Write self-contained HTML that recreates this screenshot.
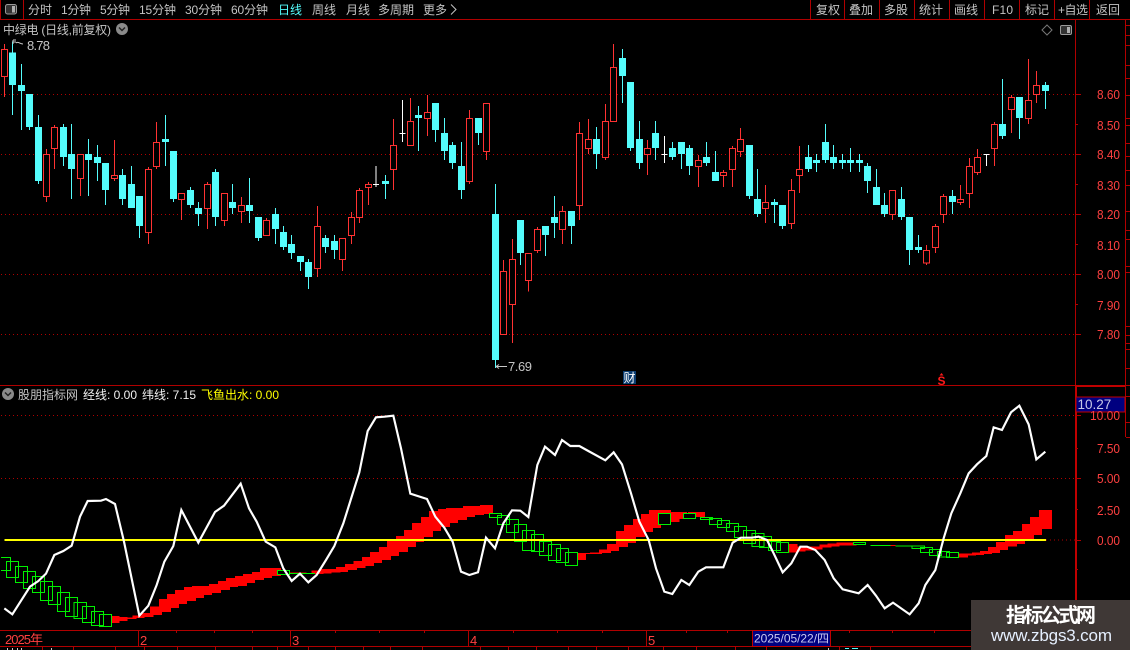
<!DOCTYPE html>
<html lang="zh">
<head>
<meta charset="utf-8">
<title>中绿电</title>
<style>
html,body{margin:0;padding:0;background:#000;width:1130px;height:650px;overflow:hidden}
svg{display:block}
text{font-family:"WenQuanYi Zen Hei","Liberation Sans","Noto Sans CJK SC",sans-serif;font-size:12px;fill:#c4c4c4}
.n{font-family:"Liberation Sans","DejaVu Sans",sans-serif}
.r{fill:#ff4040;text-anchor:end;font-size:13px}
.t{fill:#ff4040}
.w{fill:#f0f0f0}
.y{fill:#ffff00}
.c{fill:#54fcfc}
</style>
</head>
<body>
<svg width="1130" height="650" viewBox="0 0 1130 650" xmlns="http://www.w3.org/2000/svg">
<rect width="1130" height="650" fill="#000"/>

<g transform="scale(.33333)" shape-rendering="crispEdges">
<!-- dotted grid -->
<path d="M3 283.5H3240M3 463.5H3240M3 643.5H3240M3 823.5H3240M3 1003.5H3240M3 1246.5H3225M3 1435.5H3225" stroke="#b00000" stroke-width="3" stroke-dasharray="3 9" fill="none"/>
<path d="M3138 1620.5H3225" stroke="#b00000" stroke-width="3" stroke-dasharray="3 9" fill="none"/>

<g transform="translate(.5 0)">
<!-- cyan wicks -->
<path stroke="#54fcfc" stroke-width="3" fill="none" d="M37 125V345M64 192V390M88 282V390M115 345V552M190 372V498M214 372V597M265 417V588M292 435V543M316 489V615M367 507V615M394 498V624M418 588V714M496 345V498M520 453V606M571 561V624M595 606V678M646 507V678M697 552V642M748 534V669M775 651V723M826 624V732M850 678V750M874 705V777M901 768V813M925 777V867M976 705V759M1003 705V777M1156 525V597M1255 318V453M1306 309V426M1333 354V480M1357 426V507M1384 426V597M1435 354V435M1486 552V1104M1561 660V795M1636 678V768M1663 588V714M1714 633V732M1789 381V507M1867 147V309M1891 246V453M1918 363V507M1966 363V480M2017 426V480M2044 426V507M2068 435V525M2119 426V498M2146 453V543M2248 435V597M2272 507V651M2323 597V669M2347 615V687M2425 435V516M2449 462V516M2476 372V489M2500 435V507M2527 462V507M2551 444V516M2578 462V516M2602 489V579M2629 507V615M2653 579V651M2704 561V660M2728 651V795M2755 705V759M2857 570V642M3007 237V417M3058 291V417M3136 246V327"/>
<!-- cyan bodies -->
<path stroke="#54fcfc" stroke-width="21" fill="none" d="M37 157V255M64 255V273M88 282V381M115 381V543M190 381V471M214 462V507M265 462V480M292 471V489M316 489V570M367 525V597M394 552V624M418 588V678M496 417V426M520 453V597M571 570V615M595 624V642M646 516V651M697 606V624M748 615V633M775 651V714M826 642V687M850 696V741M874 732V759M901 768V786M925 786V831M976 714V741M1003 723V750M1156 543V552M1255 345V354M1306 309V390M1333 399V453M1357 435V489M1384 498V570M1435 354V399M1486 642V1080M1561 660V759M1636 678V705M1663 651V669M1714 633V678M1789 417V462M1867 174V228M1891 246V444M1918 417V489M1966 399V444M2017 444V471M2044 426V462M2068 444V498M2119 471V489M2146 516V543M2248 435V588M2272 597V642M2323 606V615M2347 615V678M2425 471V507M2449 480V489M2476 426V480M2500 471V489M2527 480V489M2551 480V489M2578 480V489M2602 498V543M2629 561V615M2653 615V642M2704 597V651M2728 651V750M2755 741V750M2857 588V606M3007 372V408M3058 291V354M3136 255V273"/>
<!-- red wicks -->
<path stroke="#ff3232" stroke-width="3" fill="none" d="M13 132V291M139 447V606M163 375V507M241 462V588M343 420V543M445 501V732M469 366V507M544 579V660M622 546V687M673 579V678M724 591V669M799 654V708M952 618V831M1027 714V813M1054 636V732M1078 564V669M1105 546V615M1180 357V570M1231 294V438M1282 285V408M1408 330V552M1459 309V480M1510 780V1004M1537 717V1029M1585 760V875M1612 681V759M1687 618V732M1738 366V660M1765 357V462M1816 312V480M1840 132V365M1942 420V525M2095 465V561M2170 510V561M2197 438V561M2221 384V471M2296 555V669M2374 537V687M2398 438V579M2677 571V660M2779 735V795M2806 672V759M2830 582V669M2881 555V615M2908 474V624M2932 447V525M2983 366V498M3034 285V399M3085 177V372M3109 213V309"/>
<!-- red hollow bodies -->
<path stroke="#ff3232" stroke-width="3" fill="#000" d="M4 148h18V230h-18zM130 463h18V589h-18zM154 382h18V445h-18zM232 463h18V535h-18zM334 526h18V535h-18zM436 508h18V698h-18zM460 427h18V499h-18zM535 580h18V598h-18zM613 553h18V626h-18zM664 580h18V662h-18zM715 616h18V635h-18zM790 661h18V707h-18zM943 679h18V806h-18zM1018 715h18V779h-18zM1045 652h18V707h-18zM1069 571h18V652h-18zM1096 553h18V563h-18zM1171 436h18V509h-18zM1222 364h18V437h-18zM1273 337h18V356h-18zM1399 355h18V545h-18zM1450 310h18V455h-18zM1501 814h18V1004h-18zM1528 778h18V914h-18zM1576 760h18V842h-18zM1603 688h18V752h-18zM1678 634h18V689h-18zM1729 400h18V617h-18zM1756 418h18V446h-18zM1807 364h18V473h-18zM1831 202h18V365h-18zM1933 445h18V464h-18zM2086 481h18V500h-18zM2161 517h18V526h-18zM2188 445h18V509h-18zM2212 418h18V455h-18zM2287 607h18V626h-18zM2365 571h18V671h-18zM2389 508h18V527h-18zM2668 571h18V644h-18zM2770 751h18V789h-18zM2797 679h18V743h-18zM2821 589h18V644h-18zM2872 598h18V608h-18zM2899 499h18V581h-18zM2923 472h18V518h-18zM2974 373h18V445h-18zM3025 292h18V329h-18zM3076 301h18V356h-18zM3100 256h18V284h-18z"/>
<!-- white doji -->
<path stroke="#fff" stroke-width="3" fill="none" d="M1128 498V561M1119 553H1137M1207 300V426M1198 400H1216M1993 408V489M1984 463H2002M2959 463V498M2950 463H2968"/>
</g>

<!-- lower indicator -->
<g transform="translate(0 1155)">
<!-- red band -->
<path fill="#ff0000" d="M322 693h36V714h-36zM346 696h36V708h-36zM373 697h36V702h-36zM397 691h36V699h-36zM424 684h36V696h-36zM450 665h36V690h-36zM477 642h36V681h-36zM501 627h36V669h-36zM525 615h36V657h-36zM552 606h36V648h-36zM576 603h36V639h-36zM600 603h36V630h-36zM627 597h36V624h-36zM654 588h36V615h-36zM678 579h36V606h-36zM705 573h36V603h-36zM729 567h36V594h-36zM756 561h36V585h-36zM780 549h36V579h-36zM807 549h36V573h-36zM868 562h52V567h-52zM934 556h36V567h-36zM958 552h36V565h-36zM985 552h36V562h-36zM1008 546h36V561h-36zM1035 537h36V555h-36zM1060 528h36V549h-36zM1086 516h36V543h-36zM1110 501h36V534h-36zM1137 486h36V525h-36zM1161 468h36V513h-36zM1188 453h36V501h-36zM1212 435h36V486h-36zM1236 414h36V471h-36zM1263 396h36V456h-36zM1287 378h36V438h-36zM1314 372h36V426h-36zM1338 369h36V414h-36zM1365 369h36V405h-36zM1389 363h36V396h-36zM1416 363h36V390h-36zM1440 360h39V387h-39zM1722 504h36V525h-36zM1746 504h36V507h-36zM1770 502h36V507h-36zM1797 493h36V504h-36zM1821 477h36V498h-36zM1848 438h36V486h-36zM1872 420h36V474h-36zM1899 402h36V456h-36zM1923 387h36V441h-36zM1947 375h36V429h-36zM1977 375h36V419h-36zM2013 381h25V411h-25zM2025 381h36V402h-36zM2064 381h51V396h-51zM2356 477h36V502h-36zM2380 484h36V500h-36zM2407 484h36V497h-36zM2431 484h36V494h-36zM2458 478h36V488h-36zM2482 475h36V485h-36zM2509 472h36V482h-36zM2533 472h36V482h-36zM2671 480h15V483h-15zM2868 505h36V518h-36zM2892 505h36V512h-36zM2916 502h36V510h-36zM2940 498h36V507h-36zM2964 486h36V504h-36zM2988 471h36V495h-36zM3015 450h36V485h-36zM3039 438h36V477h-36zM3066 417h36V465h-36zM3090 396h36V450h-36zM3117 375h39V432h-39z"/>
<!-- green hollow -->
<path stroke="#00f000" stroke-width="3" fill="#000" d="M3 517H32V556H3M19 529h37V577h-37zM46 544h37V592h-37zM70 559h37V610h-37zM97 574h37V622h-37zM121 589h37V646h-37zM145 604h37V658h-37zM172 622h37V679h-37zM196 637h37V694h-37zM222 652h37V700h-37zM247 664h37V712h-37zM274 679h37V721h-37zM298 688h37V725h-37zM832 556h37V568h-37zM1468 385h37V397h-37zM1492 392h37V418h-37zM1519 403h37V442h-37zM1543 418h37V469h-37zM1567 436h37V497h-37zM1594 448h37V500h-37zM1618 469h37V512h-37zM1645 478h37V527h-37zM1669 490h37V532h-37zM1696 502h37V542h-37zM1975 385h37V419h-37zM2050 385h37V401h-37zM2101 397h37V404h-37zM2128 400h37V418h-37zM2152 407h37V428h-37zM2179 415h37V440h-37zM2203 424h37V458h-37zM2230 436h37V476h-37zM2256 446h36V485h-36zM2278 454h37V488h-37zM2305 470h37V497h-37zM2329 472h37V502h-37zM2560 472h37V479h-37zM2736 483h37V490h-37zM2761 488h37V502h-37zM2788 493h37V512h-37zM2812 499h37V516h-37zM2839 503h37V517h-37z"/>
<path stroke="#00f000" stroke-width="3" fill="none" d="M868 566H945M2611 481H2671M2686 483H2736"/>
<!-- yellow -->
<path stroke="#ffff00" stroke-width="6" fill="none" d="M13 465H3138"/>
</g>
</g>

<!-- white line in lower panel -->
<g transform="translate(0 385) scale(.33333)">
<polyline fill="none" stroke="#fff" stroke-width="6.5" stroke-linejoin="miter" points="13,670 37,688 90,605 115,588 138,566 163,510 190,498 215,482 240,395 263,348 303,347 318,342 345,357 372,470 418,692 445,662 470,600 493,530 520,483 544,375 595,473 645,381 672,362 722,296 747,370 770,410 797,470 826,487 850,550 875,588 900,566 925,592 950,570 978,525 1003,483 1030,415 1052,345 1078,262 1103,138 1128,97 1153,95 1180,92 1203,190 1231,326 1281,342 1306,395 1333,428 1358,470 1383,560 1408,570 1434,562 1458,458 1485,490 1510,415 1536,376 1561,377 1585,396 1612,240 1635,185 1665,210 1686,165 1711,183 1738,183 1765,198 1816,226 1841,202 1866,238 1893,325 1918,410 1946,465 1968,550 1993,620 2017,627 2044,585 2068,600 2095,560 2118,547 2170,547 2198,473 2223,458 2256,458 2276,455 2301,465 2321,505 2348,562 2374,535 2401,485 2421,485 2446,495 2474,525 2501,580 2528,613 2576,625 2603,600 2628,632 2654,670 2679,653 2729,688 2756,655 2776,600 2806,555 2831,460 2854,385 2881,325 2906,265 2931,238 2959,213 2981,127 3006,135 3033,82 3058,62 3086,118 3109,223 3136,200"/>
</g>

<g shape-rendering="crispEdges">
<!-- frame lines -->
<path stroke="#b00000" stroke-width="1" fill="none" d="M0 19.5H1130M0 385.5H1130M0 630.5H1075M0 646.5H1130M1075.5 19V630M23.5 0V19M.5 0V19M810.5 0V19M844.5 0V19M879.5 0V19M914.5 0V19M949.5 0V19M984.5 0V19M1019.5 0V19M1054.5 0V19M1089.5 0V19M1125.5 19V437"/>
<path stroke="#c00000" stroke-width="2" fill="none" d="M1076 385V630M1076 386H1125"/>
<!-- axis ticks -->
<path stroke="#b00000" stroke-width="1" fill="none" d="M1075 94.5h6M1075 124.5h3M1075 154.5h6M1075 184.5h3M1075 214.5h6M1075 244.5h3M1075 274.5h6M1075 304.5h3M1075 334.5h6M1075 415.5h6M1075 448.5h3M1075 478.5h6M1075 509.5h3M1075 540.5h6M1075 569.5h3M1126 25.5h4M1126 35.5h4M1126 45.5h4M1126 65.5h4M1126 78.5h4M1126 95.5h4M1126 118.5h4M1126 125.5h4M1126 143.5h4M1126 156.5h4M1126 170.5h4M1126 185.5h4M1126 211.5h4M1126 230.5h4M1126 239.5h4M1126 266.5h4M1126 272.5h4M1126 326.5h4M1126 335.5h4M1126 343.5h4M1126 349.5h4M1126 368.5h4M1126 396.5h4M1126 422.5h4M1126 437.5h4"/>
<!-- time ticks -->
<path stroke="#b00000" stroke-width="1" fill="none" d="M138.5 630V646M290.5 630V646M468.5 630V646M646.5 630V646M176.5 630v3M214.5 630v3M252.5 630v3M335.5 630v3M379.5 630v3M424.5 630v3M513.5 630v3M557.5 630v3M602.5 630v3M686.5 630v3M727.5 630v3M849.5 630v3M892.5 630v3M934.5 630v3M42.5 646v4M73.5 646v4M115.5 646v4M144.5 646v4M177.5 646v4M215.5 646v4M252.5 646v4M277.5 646v4M308.5 646v4M335.5 646v4M363.5 646v4M390.5 646v4M422.5 646v4M480.5 646v4M508.5 646v4M536.5 646v4M568.5 646v4M596.5 646v4M628.5 646v4M663.5 646v4M696.5 646v4M735.5 646v4M766.5 646v4M839.5 646v4M870.5 646v4"/>
<path stroke="#c8c8c8" stroke-width="1" fill="none" d="M7.5 648v2M12.5 648v2M17.5 648v2M21.5 648v2M51.5 648v2M828.5 648v2"/>
<path stroke="#54fcfc" stroke-width="1" fill="none" d="M845 648.5h4M852 648.5h6"/>
<!-- blue boxes -->
<rect x="1076" y="397" width="49" height="15" fill="#000080" stroke="#c00000" stroke-width="1"/>
<rect x="752.5" y="630.5" width="78" height="16" fill="#000080" stroke="#c00000" stroke-width="1"/>
<rect x="623" y="371" width="13" height="13" fill="#0c3d70"/>
</g>

<!-- toolbar -->
<rect x="5.500" y="4.500" width="11" height="9.500" rx="2" fill="#333" stroke="#9a9a9a" stroke-width="1"/>
<rect x="12" y="6" width="3" height="6.500" fill="#b0b0b0"/>

<text x="28" y="14">分时</text>
<text x="61" y="14" textLength="30">1分钟</text>
<text x="100" y="14" textLength="30">5分钟</text>
<text x="139" y="14" textLength="37">15分钟</text>
<text x="185" y="14" textLength="37">30分钟</text>
<text x="231" y="14" textLength="37">60分钟</text>
<text x="278" y="14" class="c">日线</text>
<text x="312" y="14">周线</text>
<text x="346" y="14">月线</text>
<text x="378" y="14">多周期</text>
<text x="423" y="14">更多</text>
<path d="M451 4.500L456 9.500L451 14.500" fill="none" stroke="#c4c4c4" stroke-width="1"/>

<text x="816" y="14">复权</text>
<text x="849" y="14">叠加</text>
<text x="884" y="14">多股</text>
<text x="919" y="14">统计</text>
<text x="954" y="14">画线</text>
<text x="992" y="14" textLength="21">F10</text>
<text x="1025" y="14">标记</text>
<text x="1058" y="14" textLength="30">+自选</text>
<text x="1096" y="14">返回</text>

<!-- titles -->
<text x="3" y="34" textLength="108">中绿电 (日线,前复权)</text>
<circle cx="122" cy="29" r="6" fill="#8a8a8a"/>
<path d="M119 27.500L122 30.500L125 27.500" fill="none" stroke="#222" stroke-width="1.500"/>
<path d="M1047 25l5 5-5 5-5-5z" fill="none" stroke="#777" stroke-width="1"/>
<rect x="1060.500" y="25.500" width="11" height="9" rx="1.500" fill="#333" stroke="#9a9a9a" stroke-width="1"/>
<rect x="1067" y="27" width="3" height="6" fill="#b0b0b0"/>

<!-- hi/lo markers -->
<path d="M13 40V44M13 40h3M13 42h3M16 43c2-2 4 1 7 1" fill="none" stroke="#c8c8c8" stroke-width="1"/>
<text x="27" y="50" class="n" textLength="23" style="font-size:13px">8.78</text>
<path d="M496 366.500H507M496 366.500l3-2M496 366.500l3 2" fill="none" stroke="#c8c8c8" stroke-width="1"/>
<text x="508" y="371" class="n" textLength="24" style="font-size:13px">7.69</text>

<!-- icons -->
<text x="623.500" y="382" style="fill:#fff;font-size:12px">财</text>
<path d="M941.500 373l2 2.500h-4z" fill="#ff1a1a"/>
<text x="941.500" y="385" text-anchor="middle" class="n" style="fill:#ff1a1a;font-size:12px;font-weight:bold">S</text>

<!-- lower header -->
<circle cx="8" cy="394" r="6" fill="#8a8a8a"/>
<path d="M5 392.500L8 395.500L11 392.500" fill="none" stroke="#222" stroke-width="1.500"/>
<text x="18" y="399" textLength="60">股朋指标网</text>
<text x="83" y="399" class="w" textLength="54">经线: 0.00</text>
<text x="142" y="399" class="w" textLength="54">纬线: 7.15</text>
<text x="201" y="399" class="y" textLength="78">飞鱼出水: 0.00</text>

<!-- axis labels -->
<text x="1120" y="99" class="r n" textLength="23" lengthAdjust="spacingAndGlyphs">8.60</text>
<text x="1120" y="130" class="r n" textLength="23" lengthAdjust="spacingAndGlyphs">8.50</text>
<text x="1120" y="159" class="r n" textLength="23" lengthAdjust="spacingAndGlyphs">8.40</text>
<text x="1120" y="190" class="r n" textLength="23" lengthAdjust="spacingAndGlyphs">8.30</text>
<text x="1120" y="219" class="r n" textLength="23" lengthAdjust="spacingAndGlyphs">8.20</text>
<text x="1120" y="250" class="r n" textLength="23" lengthAdjust="spacingAndGlyphs">8.10</text>
<text x="1120" y="279" class="r n" textLength="23" lengthAdjust="spacingAndGlyphs">8.00</text>
<text x="1120" y="310" class="r n" textLength="23" lengthAdjust="spacingAndGlyphs">7.90</text>
<text x="1120" y="339" class="r n" textLength="23" lengthAdjust="spacingAndGlyphs">7.80</text>
<text x="1120" y="420" class="r n" textLength="30" lengthAdjust="spacingAndGlyphs">10.00</text>
<text x="1120" y="453" class="r n" textLength="23" lengthAdjust="spacingAndGlyphs">7.50</text>
<text x="1120" y="483" class="r n" textLength="23" lengthAdjust="spacingAndGlyphs">5.00</text>
<text x="1120" y="515" class="r n" textLength="23" lengthAdjust="spacingAndGlyphs">2.50</text>
<text x="1120" y="545" class="r n" textLength="23" lengthAdjust="spacingAndGlyphs">0.00</text>
<text x="1077.500" y="409" class="n" style="fill:#c8c8e8;font-size:13.500px">10.27</text>

<!-- time labels -->
<text x="5" y="644" class="t" textLength="38" style="font-size:13px">2025年</text>
<text x="140" y="645" class="t n" style="font-size:13px">2</text>
<text x="292" y="645" class="t n" style="font-size:13px">3</text>
<text x="470" y="645" class="t n" style="font-size:13px">4</text>
<text x="648" y="645" class="t n" style="font-size:13px">5</text>
<text x="754" y="642.500" style="fill:#c8c8f0" textLength="75">2025/05/22/四</text>

<!-- watermark -->
<rect x="971" y="600" width="159" height="50" fill="#3f3836"/>
<text x="1051" y="622" text-anchor="middle" style="fill:#fff;font-size:20px;font-weight:bold;font-family:'Noto Sans CJK SC','WenQuanYi Zen Hei',sans-serif" textLength="90">指标公式网</text>
<text x="1051.500" y="641" text-anchor="middle" class="n" style="fill:#e6f0ff;font-size:17px" textLength="121">www.zbgs3.com</text>
</svg>
</body>
</html>
